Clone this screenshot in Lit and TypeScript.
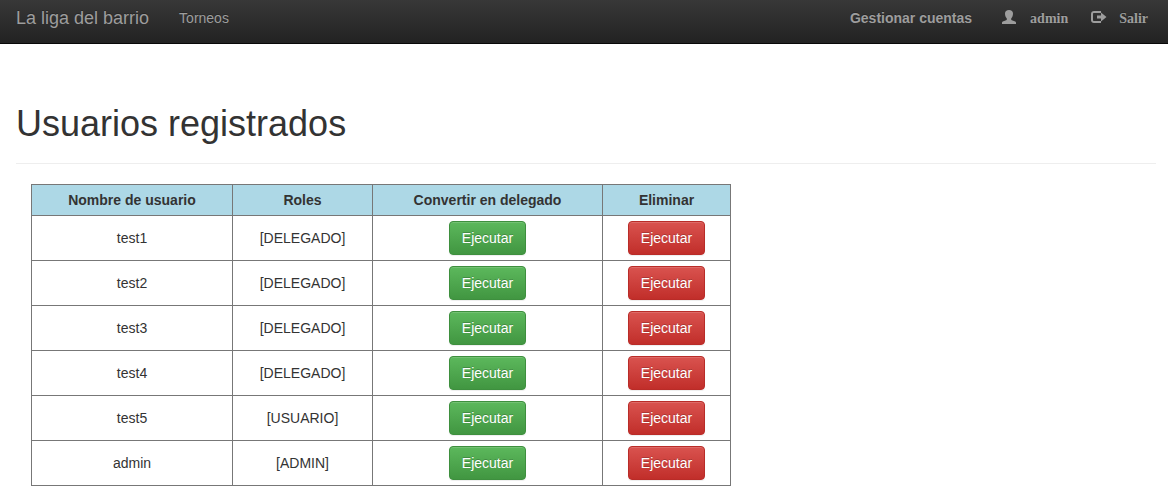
import { LitElement, html, css } from "lit";
import { customElement, state } from "lit/decorators.js";

interface User {
  name: string;
  role: string;
}

@customElement("app-navbar")
class AppNavbar extends LitElement {
  static styles = css`
    :host {
      display: block;
    }
    .bar {
      display: flex;
      align-items: center;
      justify-content: space-between;
      padding: 8px 20px 15px 16px;
      border-bottom: 1px solid #080808;
      background: linear-gradient(to bottom, #383838, #222);
      text-shadow: 0 -1px 0 rgba(0, 0, 0, 0.25);
      font-size: 14px;
      line-height: 20px;
    }
    .group {
      display: flex;
      align-items: center;
      gap: 30px;
    }
    .session {
      font-weight: bold;
    }
    .icons {
      display: flex;
      gap: 23px;
    }
    a {
      color: #9d9d9d;
      text-decoration: none;
    }
    a:hover {
      color: #fff;
    }
    .brand {
      font-size: 18px;
    }
    .with-icon {
      display: flex;
      align-items: center;
      gap: 12px;
      font-family: "Liberation Serif", serif;
      line-height: 18px;
    }
    .with-icon span {
      padding-top: 2px;
    }
    svg {
      display: block;
      width: 16px;
      height: 16px;
      fill: currentColor;
    }
  `;

  render() {
    return html`
      <nav class="bar">
        <div class="group">
          <a class="brand" href="#">La liga del barrio</a>
          <a href="#torneos">Torneos</a>
        </div>
        <div class="group session">
          <a href="#cuentas">Gestionar cuentas</a>
          <div class="icons">
            <a class="with-icon" href="#perfil">
              <svg viewBox="0 0 16 16" aria-hidden="true">
                <path
                  d="M7 0C4.500 0 3 1.300 3 3.500C3 5.700 3.800 7.400 4.800 8.600V9.400C4.800 9.800 4.600 10 4.100 10.200L0.800 11.600C0.200 11.900 0 12.200 0 12.800V14H14V12.800C14 12.200 13.800 11.900 13.200 11.600L9.900 10.200C9.400 10 9.200 9.800 9.200 9.400V8.600C10.200 7.400 11 5.700 11 3.500C11 1.300 9.500 0 7 0Z"
                />
              </svg>
              <span>admin</span>
            </a>
            <a class="with-icon" href="#salir">
              <svg viewBox="0 0 16 16" aria-hidden="true">
                <path
                  d="M10 1H3C1.300 1 0 2.300 0 4V10C0 11.700 1.300 13 3 13H10V11H3C2.400 11 2 10.600 2 10V4C2 3.400 2.400 3 3 3H10Z"
                />
                <path d="M10 2.500L15.500 7L10 11.500V8.500H6V5.500H10Z" />
              </svg>
              <span>Salir</span>
            </a>
          </div>
        </div>
      </nav>
    `;
  }
}

@customElement("user-table")
class UserTable extends LitElement {
  static styles = css`
    :host {
      display: block;
    }
    table {
      width: 100%;
      max-width: 700px;
      table-layout: fixed;
      border-collapse: collapse;
      text-align: center;
    }
    .name {
      width: 201px;
    }
    .roles {
      width: 140px;
    }
    .convert {
      width: 230px;
    }
    th,
    td {
      box-sizing: border-box;
      padding: 5px;
      border: 1px solid #777;
    }
    th {
      background: lightblue;
    }
    button {
      display: inline-block;
      padding: 6px 12px;
      border: 1px solid;
      border-radius: 4px;
      color: #fff;
      font: inherit;
      text-shadow: 0 -1px 0 rgba(0, 0, 0, 0.2);
      vertical-align: middle;
      box-shadow:
        inset 0 1px 0 rgba(255, 255, 255, 0.15),
        0 1px 1px rgba(0, 0, 0, 0.075);
      cursor: pointer;
    }
    .success {
      border-color: #3e8f3e;
      background: linear-gradient(to bottom, #5cb85c, #419641);
    }
    .danger {
      border-color: #b92c28;
      background: linear-gradient(to bottom, #d9534f, #c12e2a);
    }
  `;

  @state()
  private users: User[] = [
    { name: "test1", role: "DELEGADO" },
    { name: "test2", role: "DELEGADO" },
    { name: "test3", role: "DELEGADO" },
    { name: "test4", role: "DELEGADO" },
    { name: "test5", role: "USUARIO" },
    { name: "admin", role: "ADMIN" },
  ];

  render() {
    return html`
      <table>
        <thead>
          <tr>
            <th class="name" scope="col">Nombre de usuario</th>
            <th class="roles" scope="col">Roles</th>
            <th class="convert" scope="col">Convertir en delegado</th>
            <th scope="col">Eliminar</th>
          </tr>
        </thead>
        <tbody>
          ${this.users.map(
            (user) => html`
              <tr>
                <td>${user.name}</td>
                <td>[${user.role}]</td>
                <td><button class="success" type="button">Ejecutar</button></td>
                <td><button class="danger" type="button">Ejecutar</button></td>
              </tr>
            `,
          )}
        </tbody>
      </table>
    `;
  }
}

@customElement("app-root")
class AppRoot extends LitElement {
  static styles = css`
    :host {
      display: block;
      color: #333;
      background: #fff;
      font: 14px/20px "Liberation Sans", Arial, sans-serif;
    }
    main {
      padding: 60px 12px 15px 16px;
    }
    h1 {
      margin: 0;
      padding-bottom: 19px;
      border-bottom: 1px solid #eee;
      font-size: 36px;
      font-weight: normal;
      line-height: 40px;
    }
    .content {
      padding: 20px 15px 0;
    }
  `;

  render() {
    return html`
      <app-navbar></app-navbar>
      <main>
        <h1>Usuarios registrados</h1>
        <div class="content"><user-table></user-table></div>
      </main>
    `;
  }
}
